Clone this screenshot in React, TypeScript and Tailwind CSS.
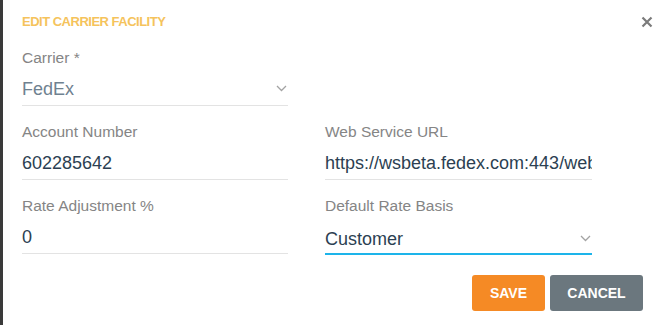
import React from "react";

const Chevron = () => (
  <svg width="11" height="7" viewBox="0 0 11 7" className="absolute right-[1px] top-[6px]">
    <path d="M1 1 L5.5 5.5 L10 1" fill="none" stroke="#a3a3a3" strokeWidth="1.3" />
  </svg>
);

function Field({
  label,
  value,
  select,
  muted,
  focused,
}: {
  label: string;
  value: string;
  select?: boolean;
  muted?: boolean;
  focused?: boolean;
}) {
  return (
    <div className={focused ? "mt-[3px]" : ""}>
      <div className="text-[15.5px] leading-[18px] text-[#858585]">{label}</div>
      <div
        className={
          "relative " +
          (focused
            ? "mt-[14px] pb-[4px] border-b-2 border-[#1db4ea]"
            : "mt-[12px] pb-[6px] border-b border-[#e3e3e3]")
        }
      >
        <div
          className={
            "text-[18px] leading-[20px] whitespace-nowrap overflow-hidden " +
            (muted ? "text-[#6f8190]" : "text-[#2c3f52]")
          }
        >
          {value}
        </div>
        {select && <Chevron />}
      </div>
    </div>
  );
}

export default function App() {
  return (
    <div
      className="w-[664px] h-[325px] bg-white border-l-[3px] border-[#3a3a3a] relative"
      style={{ fontFamily: "'Liberation Sans', Arial, sans-serif" }}
    >
      <div className="pl-[19px] pr-[21px] pt-[14px]">
        <div className="flex items-start justify-between">
          <div className="text-[13px] leading-[16px] font-bold tracking-[-0.5px] text-[#f5c35c]">
            EDIT CARRIER FACILITY
          </div>
          <svg width="12" height="12" viewBox="0 0 12 12" className="mt-[2px] mr-[-10px]">
            <path d="M1.5 1.5 L10.5 10.5 M10.5 1.5 L1.5 10.5" stroke="#7b7b7b" strokeWidth="2.2" />
          </svg>
        </div>
        <div className="mt-[19px] grid grid-cols-[266px_267px] gap-x-[37px] gap-y-[17px]">
          <Field label="Carrier *" value="FedEx" select muted />
          <div />
          <Field label="Account Number" value="602285642" />
          <Field label="Web Service URL" value="https://wsbeta.fedex.com:443/web-services" />
          <Field label="Rate Adjustment %" value="0" />
          <div className="-mt-[3px]">
            <Field label="Default Rate Basis" value="Customer" select focused />
          </div>
        </div>
        <div className="mt-[20px] flex justify-end gap-[5px]">
          <button className="w-[73px] h-[36px] rounded-[3px] bg-[#f58a25] text-white text-[14px] font-bold">
            SAVE
          </button>
          <button className="w-[93px] h-[36px] rounded-[3px] bg-[#6b777e] text-white text-[14px] font-bold">
            CANCEL
          </button>
        </div>
      </div>
    </div>
  );
}
